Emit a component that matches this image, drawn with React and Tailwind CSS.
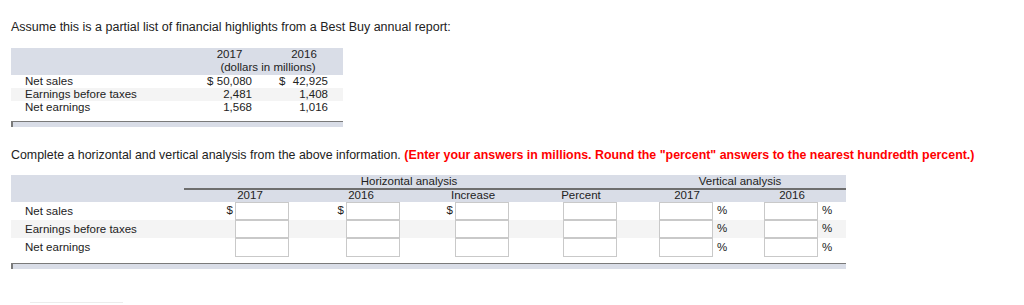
import React from "react";

const headBg = "bg-[#d9dde7]";

function Cell({ w, className = "", children }) {
  return <div className={"shrink-0 " + w + " " + className}>{children}</div>;
}

function Box({ tall }) {
  return (
    <div
      className={
        "w-[54px] shrink-0 border border-[#c9c9c9] bg-white " + (tall ? "h-[19px]" : "h-[18px]")
      }
    />
  );
}

function AnalysisRow({ label, dollar, shaded, tall }) {
  return (
    <div
      className={
        "flex items-center " + (tall ? "h-[19px] " : "h-[18px] ") + (shaded ? "bg-[#f4f4f4]" : "")
      }
    >
      <Cell w="w-[211px]" className="pl-[14px] pt-[1px]">{label}</Cell>
      <Cell w="w-[13px]" className="pr-[2px] text-right">{dollar ? "$" : ""}</Cell>
      <Box tall={tall} />
      <Cell w="w-[44px]" />
      <Cell w="w-[13px]" className="pr-[2px] text-right">{dollar ? "$" : ""}</Cell>
      <Box tall={tall} />
      <Cell w="w-[42px]" />
      <Cell w="w-[13px]" className="pr-[2px] text-right">{dollar ? "$" : ""}</Cell>
      <Box tall={tall} />
      <Cell w="w-[54px]" />
      <Box tall={tall} />
      <Cell w="w-[42px]" />
      <Box tall={tall} />
      <Cell w="w-[51px]" className="pl-[4px]">%</Cell>
      <Box tall={tall} />
      <Cell w="w-[28px]" className="pl-[4px]">%</Cell>
    </div>
  );
}

function Highlights() {
  const rows = [
    ["Net sales", "$", "50,080", "$", "42,925"],
    ["Earnings before taxes", "", "2,481", "", "1,408"],
    ["Net earnings", "", "1,568", "", "1,016"],
  ];
  return (
    <div className="ml-[11px] mt-[14px] w-[332px]">
      <div className={headBg + " h-[27px] leading-[13px]"}>
        <div className="flex">
          <Cell w="w-[192px]" />
          <Cell w="w-[53px]" className="text-center">2017</Cell>
          <Cell w="w-[19px]" />
          <Cell w="w-[58px]" className="text-center">2016</Cell>
        </div>
        <div className="flex">
          <Cell w="w-[192px]" />
          <Cell w="w-[130px]" className="text-center">(dollars in millions)</Cell>
        </div>
      </div>
      {rows.map((r, i) => (
        <div
          key={r[0]}
          className={"flex h-[13px] leading-[13px] " + (i === 1 ? "bg-[#f4f4f4]" : "")}
        >
          <Cell w="w-[192px]" className="pl-[14px]">{r[0]}</Cell>
          <Cell w="w-[53px]" className="flex justify-between pl-[4px] pr-[4px]">
            <span>{r[1]}</span>
            <span>{r[2]}</span>
          </Cell>
          <Cell w="w-[19px]" />
          <Cell w="w-[58px]" className="flex justify-between pl-[4px] pr-[5px]">
            <span>{r[3]}</span>
            <span>{r[4]}</span>
          </Cell>
        </div>
      ))}
      <div className="mt-[7px] h-[6px] border-l-2 border-t border-[#7a7a7a] bg-[#d9dde7]" />
    </div>
  );
}

function Analysis() {
  return (
    <div className="ml-[11px] mt-[13px] w-[835px]">
      <div className={headBg + " pb-[1px]"}>
        <div className="flex h-[15px] items-end leading-[14px]">
          <Cell w="w-[173px]" />
          <Cell w="w-[450px]" className="border-b-2 border-[#6e6e6e] text-center">
            Horizontal analysis
          </Cell>
          <Cell w="w-[212px]" className="border-b-2 border-[#6e6e6e] text-center">
            Vertical analysis
          </Cell>
        </div>
        <div className="flex h-[11px] leading-[11px]">
          <Cell w="w-[173px]" />
          <Cell w="w-[132px]" className="text-center">2017</Cell>
          <Cell w="w-[90px]" className="text-center">2016</Cell>
          <Cell w="w-[134px]" className="text-center">Increase</Cell>
          <Cell w="w-[82px]" className="text-center">Percent</Cell>
          <Cell w="w-[130px]" className="text-center">2017</Cell>
          <Cell w="w-[80px]" className="text-center">2016</Cell>
        </div>
      </div>
      <AnalysisRow label="Net sales" dollar />
      <AnalysisRow label="Earnings before taxes" shaded />
      <AnalysisRow label="Net earnings" tall />
      <div className="mt-[6px] h-[6px] border-l-2 border-t border-[#7a7a7a] bg-[#d9dde7]" />
    </div>
  );
}

export default function App() {
  return (
    <div className="h-[305px] w-[1024px] overflow-hidden bg-white font-['Liberation_Sans',Arial,sans-serif] text-[11.5px] text-[#222]">
      <p className="ml-[11px] mt-[20px] text-[12.5px] leading-[14px]">
        Assume this is a partial list of financial highlights from a Best Buy annual report:
      </p>
      <Highlights />
      <p className="ml-[11px] mt-[21px] text-[12.4px] leading-[14px]">
        Complete a horizontal and vertical analysis from the above information.{" "}
        <span className="font-bold text-[#ff0000]">
          (Enter your answers in millions. Round the "percent" answers to the nearest hundredth percent.)
        </span>
      </p>
      <Analysis />
      <div className="ml-[30px] mt-[33px] h-[4px] w-[93px] border-t border-[#ececec]" />
    </div>
  );
}
